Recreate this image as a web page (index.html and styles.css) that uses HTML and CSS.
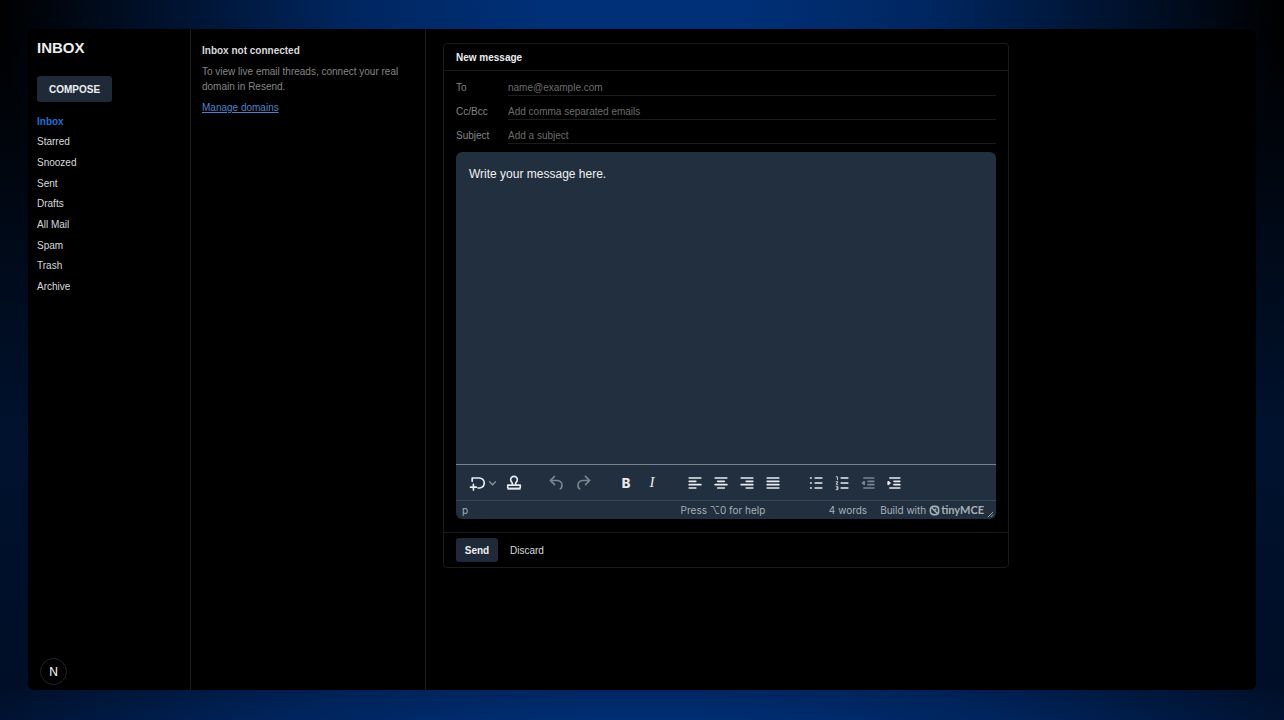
FILE: index.html
```html
<!DOCTYPE html>
<html lang="en">
  <head>
    <meta charset="UTF-8" />
    <meta name="viewport" content="width=device-width, initial-scale=1.0" />
    <title>Inbox</title>
    <link rel="stylesheet" href="styles.css">
  </head>
  <body>
    <div class="app">
      <aside class="sidebar">
        <h1>INBOX</h1>
        <button type="button" class="btn compose">COMPOSE</button>
        <nav class="folders">
          <a href="#inbox" class="active">Inbox</a>
          <a href="#starred">Starred</a>
          <a href="#snoozed">Snoozed</a>
          <a href="#sent">Sent</a>
          <a href="#drafts">Drafts</a>
          <a href="#all">All Mail</a>
          <a href="#spam">Spam</a>
          <a href="#trash">Trash</a>
          <a href="#archive">Archive</a>
        </nav>
        <button type="button" class="dev-badge" aria-label="Dev tools">N</button>
      </aside>

      <section class="threads">
        <h2>Inbox not connected</h2>
        <p>To view live email threads, connect your real domain in Resend.</p>
        <a href="#domains">Manage domains</a>
      </section>

      <main class="content">
        <form class="card" id="composeForm">
          <h2 class="card-header">New message</h2>
          <div class="fields">
            <div class="field">
              <label for="to">To</label>
              <input type="text" id="to" placeholder="name@example.com" />
            </div>
            <div class="field">
              <label for="cc">Cc/Bcc</label>
              <input type="text" id="cc" placeholder="Add comma separated emails" />
            </div>
            <div class="field">
              <label for="subject">Subject</label>
              <input type="text" id="subject" placeholder="Add a subject" />
            </div>
          </div>

          <div class="editor">
            <textarea id="message" aria-label="Message" spellcheck="false">Write your message here.</textarea>
            <div class="toolbar">
              <div class="group">
                <button type="button" class="split" aria-label="Insert">
                  <svg class="icon" viewBox="0 0 24 24"><path d="M5 10V6H14q5.500 1 5.500 6T14 18h-2M6.500 13.500v7M3 17h7" fill="none" stroke="currentColor" stroke-width="2" stroke-linecap="round" stroke-linejoin="round" /></svg>
                  <svg class="chevron" viewBox="0 0 8 8"><path d="M1 3l3 3 3-3" fill="none" stroke="currentColor" stroke-width="1.200" /></svg>
                </button>
                <button type="button" aria-label="Stamp">
                  <svg class="icon" viewBox="0 0 24 24"><path d="M10 14.500V12Q8 10 8 8a4 4 0 0 1 8 0q0 2-2 4v2.500M4.500 18v-3.500h15V18" fill="none" stroke="currentColor" stroke-width="2" stroke-linejoin="round" /><path d="M4 17.500h16V20H4z" /></svg>
                </button>
              </div>
              <div class="group">
                <button type="button" aria-label="Undo" disabled>
                  <svg class="icon" viewBox="0 0 24 24"><path d="M6.400 8H12c3.700 0 6.200 2 6.800 5.100.6 2.700-.4 5.600-2.300 6.800a1 1 0 0 1-1-1.800c1.100-.6 1.800-2.700 1.400-4.600-.5-2.100-2.100-3.500-4.900-3.500H6.400l3.300 3.300a1 1 0 1 1-1.400 1.400l-5-5a1 1 0 0 1 0-1.400l5-5a1 1 0 0 1 1.400 1.400L6.400 8Z" /></svg>
                </button>
                <button type="button" aria-label="Redo" disabled>
                  <svg class="icon" viewBox="0 0 24 24"><path d="M17.600 10H12c-2.800 0-4.400 1.400-4.900 3.500-.4 2 .3 4 1.400 4.600a1 1 0 1 1-1 1.800c-2-1.200-2.900-4.100-2.300-6.800.6-3 3-5.100 6.800-5.100h5.600l-3.300-3.300a1 1 0 1 1 1.400-1.400l5 5a1 1 0 0 1 0 1.400l-5 5a1 1 0 0 1-1.400-1.400l3.300-3.300Z" /></svg>
                </button>
              </div>
              <div class="group">
                <button type="button" class="bold" aria-label="Bold">B</button>
                <button type="button" class="italic" aria-label="Italic">I</button>
              </div>
              <div class="group">
                <button type="button" aria-label="Align left">
                  <svg class="icon lines" viewBox="0 0 24 24"><path d="M5 6h14M5 10h8M5 14h14M5 18h8" /></svg>
                </button>
                <button type="button" aria-label="Align center">
                  <svg class="icon lines" viewBox="0 0 24 24"><path d="M5 6h14M8 10h8M5 14h14M8 18h8" /></svg>
                </button>
                <button type="button" aria-label="Align right">
                  <svg class="icon lines" viewBox="0 0 24 24"><path d="M5 6h14M11 10h8M5 14h14M11 18h8" /></svg>
                </button>
                <button type="button" aria-label="Justify">
                  <svg class="icon lines" viewBox="0 0 24 24"><path d="M5 6h14M5 10h14M5 14h14M5 18h14" /></svg>
                </button>
              </div>
              <div class="group">
                <button type="button" aria-label="Bullet list">
                  <svg class="icon lines" viewBox="0 0 24 24"><path d="M11 6h8M11 12h8M11 18h8M5.500 6h.8M5.500 12h.8M5.500 18h.8" /></svg>
                </button>
                <button type="button" aria-label="Numbered list">
                  <svg class="icon lines" viewBox="0 0 24 24"><path d="M11 6h8M11 12h8M11 18h8" /><path class="thin" d="M5 4.500h1.500V8M5 10.500h2L5 13.500h2M5 16h2v4H5M5.500 18H7" /></svg>
                </button>
                <button type="button" aria-label="Outdent" disabled>
                  <svg class="icon lines" viewBox="0 0 24 24"><path d="M7 6h12M12 10h7M12 14h7M7 18h12M7.500 10.500L5.500 12l2 1.500z" /></svg>
                </button>
                <button type="button" aria-label="Indent">
                  <svg class="icon lines" viewBox="0 0 24 24"><path d="M7 6h12M12 10h7M12 14h7M7 18h12M5 10.500L7 12l-2 1.500z" /></svg>
                </button>
              </div>
            </div>
            <div class="statusbar">
              <span class="path">p</span>
              <span class="help">Press ⌥0 for help</span>
              <span class="counts">
                <span>4 words</span>
                <a href="#tiny">Build with
                  <svg class="tiny-mark" viewBox="0 0 12 12"><rect x="1.500" y="1.500" width="9" height="9" rx="3.500" fill="none" stroke="currentColor" stroke-width="1.800" /><path d="M3 3l6 6M5 6.500L8 4" fill="none" stroke="currentColor" stroke-width="1.500" /></svg><b>tinyMCE</b>
                </a>
              </span>
              <svg class="grip" viewBox="0 0 8 8"><path d="M1 7l6-6M4 7l3-3" fill="none" stroke="currentColor" /></svg>
            </div>
          </div>

          <div class="card-footer">
            <button type="submit" class="btn send">Send</button>
            <button type="button" class="discard">Discard</button>
          </div>
        </form>
      </main>
    </div>
    <script>
      document
        .getElementById("composeForm")
        .addEventListener("submit", function (event) {
          event.preventDefault();
        });
    </script>
  </body>
</html>
```
FILE: styles.css
```css
* {
  box-sizing: border-box;
}

body {
  margin: 0;
  min-height: 100vh;
  padding: 29px 28px 30px;
  display: flex;
  font-family: "Liberation Sans", Arial, sans-serif;
  font-size: 10px;
  color: #d8dadd;
  background:
    radial-gradient(ellipse 50% 70% at 50% 0, #003078 15%, #002660 45%, transparent),
    radial-gradient(ellipse 56% 14% at 50% 102%, #003078 10%, #00235a 55%, transparent),
    linear-gradient(#000 5%, #00122e 60%, #000e26);
}

h1,
h2,
p {
  margin: 0;
}

button {
  padding: 0;
  border: none;
  background: none;
  color: inherit;
  font: inherit;
  cursor: pointer;
}

.app {
  flex: 1;
  position: relative;
  display: grid;
  grid-template-columns: 163px 235px 1fr;
  background: #000;
  border-radius: 6px;
}

/* Sidebar */
.sidebar {
  padding: 10px 9px;
  border-right: 1px solid #1c1c1c;
}

.sidebar h1 {
  font-size: 15px;
  line-height: 18px;
  color: #eceef0;
}

.btn {
  background: #1f2937;
  border-radius: 3px;
  color: #eef0f2;
  font-weight: bold;
}

.compose {
  display: block;
  height: 26px;
  margin: 19px 0 9px;
  padding: 0 12px;
}

.folders {
  display: grid;
  grid-auto-rows: 1fr;
  align-items: center;
  height: 186px;
}

.folders a {
  color: inherit;
  text-decoration: none;
}

.folders .active {
  color: #1f6fd8;
  font-weight: bold;
}

.dev-badge {
  position: absolute;
  left: 12px;
  bottom: 5px;
  width: 27px;
  height: 27px;
  border: 1px solid #232323;
  border-radius: 50%;
  color: #fff;
  font-size: 12px;
}

/* Threads */
.threads {
  padding: 14px 11px;
  border-right: 1px solid #1c1c1c;
}

.threads h2 {
  font-size: 10px;
  line-height: 16px;
}

.threads p {
  margin: 5px 0 6px;
  line-height: 15px;
  color: #858585;
}

.threads a {
  line-height: 15px;
  color: #4c82c8;
}

/* Compose card */
.content {
  padding: 14px 17px;
}

.card {
  max-width: 566px;
  border: 1px solid #1a1a1a;
  border-radius: 4px;
}

.card-header {
  padding: 1px 12px 0;
  border-bottom: 1px solid #1a1a1a;
  font-size: 10px;
  line-height: 25px;
  color: #eceef0;
}

.fields {
  padding: 4px 12px 5px;
}

.field {
  display: grid;
  grid-template-columns: 52px 1fr;
  align-items: center;
  height: 24px;
  color: #858585;
}

.field input {
  height: 18px;
  padding: 2px 0 0;
  border: none;
  border-bottom: 1px solid #1c1c1c;
  outline: none;
  background: none;
  color: #d8dadd;
  font: inherit;
}

.field input::placeholder {
  color: #6c6c6c;
}

/* Editor */
.editor {
  margin: 0 12px 13px;
  background: #222f3e;
  border-radius: 6px;
  overflow: hidden;
  font-family: Inter, sans-serif;
}

.editor textarea {
  display: block;
  width: 100%;
  height: 312px;
  padding: 13px;
  border: none;
  outline: none;
  resize: none;
  background: none;
  color: #f0f2f4;
  font: 12px/18px "Liberation Sans", Arial, sans-serif;
}

.toolbar {
  display: flex;
  gap: 17px;
  height: 36px;
  padding: 0 8px;
  border-top: 1px solid #76828e;
  color: #e8ecf0;
}

.group {
  display: flex;
}

.group button {
  display: flex;
  align-items: center;
  justify-content: center;
  width: 26px;
}

.group .split {
  width: 37px;
}

.group button:disabled {
  color: #7b858f;
}

.icon {
  width: 20px;
  height: 20px;
  fill: currentColor;
}

.chevron {
  width: 9px;
  height: 9px;
  color: #8d979f;
}

.lines path {
  fill: none;
  stroke: currentColor;
  stroke-width: 2;
  stroke-linecap: round;
  stroke-linejoin: round;
}

.lines .thin {
  stroke-width: 1;
}

.group .bold {
  font-size: 13px;
  font-weight: 800;
}

.group .italic {
  font-family: "Liberation Serif", serif;
  font-size: 15px;
  font-style: italic;
}

.statusbar {
  position: relative;
  display: grid;
  grid-template-columns: 1fr auto 1fr;
  align-items: center;
  height: 19px;
  padding: 0 12px 0 6px;
  border-top: 1px solid #3b4855;
  color: #a7afb7;
}

.counts {
  display: flex;
  justify-content: flex-end;
  gap: 13px;
}

.counts a {
  display: flex;
  align-items: center;
  color: inherit;
  text-decoration: none;
}

.counts b {
  font-family: Lato, sans-serif;
  font-size: 11px;
  line-height: 12px;
}

.tiny-mark {
  width: 11px;
  height: 11px;
  margin: 0 1px 0 3px;
}

.grip {
  position: absolute;
  right: 2px;
  bottom: 1px;
  width: 7px;
  height: 7px;
}

.card-footer {
  display: flex;
  gap: 12px;
  padding: 5px 12px;
  border-top: 1px solid #1a1a1a;
}

.send {
  width: 42px;
  height: 24px;
}
```
